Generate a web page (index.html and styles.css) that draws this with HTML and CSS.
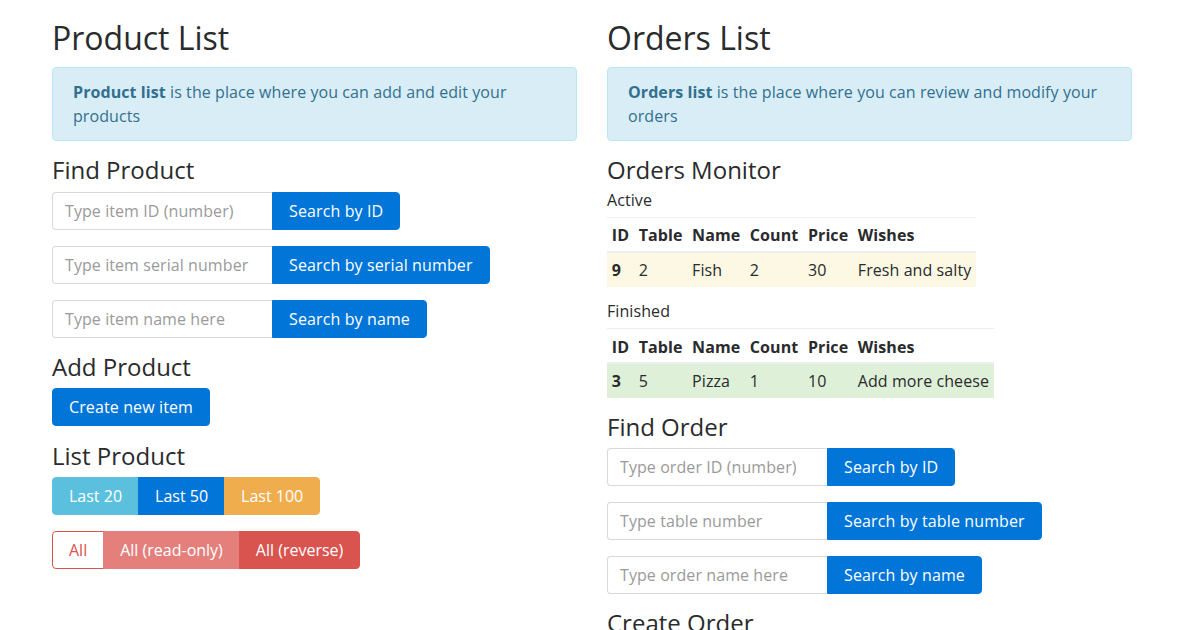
FILE: index.html
```html
<!DOCTYPE html>
<html lang="en">
<head>
<meta charset="utf-8">
<title>Products and Orders</title>
<link rel="stylesheet" href="styles.css">
</head>
<body>
<div class="page">
  <section class="col">
    <h2 class="title">Product List</h2>
    <div class="alert"><strong>Product list</strong> is the place where you can add and edit your products</div>

    <h4 class="sub">Find Product</h4>
    <div class="input-group"><input class="field" type="text" placeholder="Type item ID (number)"><button class="btn btn-primary btn-end">Search by ID</button></div>
    <div class="input-group"><input class="field" type="text" placeholder="Type item serial number"><button class="btn btn-primary btn-end">Search by serial number</button></div>
    <div class="input-group"><input class="field" type="text" placeholder="Type item name here"><button class="btn btn-primary btn-end">Search by name</button></div>

    <h4 class="sub">Add Product</h4>
    <div class="block"><button class="btn btn-primary btn-solo">Create new item</button></div>

    <h4 class="sub">List Product</h4>
    <div class="btn-group">
      <button class="btn btn-info">Last 20</button><button class="btn btn-primary">Last 50</button><button class="btn btn-warning">Last 100</button>
    </div>
    <div class="btn-group">
      <button class="btn btn-outline-danger">All</button><button class="btn btn-danger-light">All (read-only)</button><button class="btn btn-danger">All (reverse)</button>
    </div>
  </section>

  <section class="col">
    <h2 class="title">Orders List</h2>
    <div class="alert"><strong>Orders list</strong> is the place where you can review and modify your orders</div>

    <h4 class="sub">Orders Monitor</h4>
    <div class="label label-first">Active</div>
    <table class="table">
      <thead><tr><th>ID</th><th>Table</th><th>Name</th><th>Count</th><th>Price</th><th>Wishes</th></tr></thead>
      <tbody><tr class="row-warning"><th>9</th><td>2</td><td>Fish</td><td>2</td><td>30</td><td>Fresh and salty</td></tr></tbody>
    </table>
    <div class="label">Finished</div>
    <table class="table table-last">
      <thead><tr><th>ID</th><th>Table</th><th>Name</th><th>Count</th><th>Price</th><th>Wishes</th></tr></thead>
      <tbody><tr class="row-success"><th>3</th><td>5</td><td>Pizza</td><td>1</td><td>10</td><td>Add more cheese</td></tr></tbody>
    </table>

    <h4 class="sub">Find Order</h4>
    <div class="input-group"><input class="field" type="text" placeholder="Type order ID (number)"><button class="btn btn-primary btn-end">Search by ID</button></div>
    <div class="input-group"><input class="field" type="text" placeholder="Type table number"><button class="btn btn-primary btn-end">Search by table number</button></div>
    <div class="input-group"><input class="field" type="text" placeholder="Type order name here"><button class="btn btn-primary btn-end">Search by name</button></div>

    <h4 class="sub">Create Order</h4>
  </section>
</div>
</body>
</html>
```

FILE: styles.css
```css
* { box-sizing: border-box; }
html, body { margin: 0; padding: 0; }
body {
  font-family: "Open Sans", "Liberation Sans", sans-serif;
  font-size: 16px;
  line-height: 1.5;
  letter-spacing: 0.08px;
  color: #292b2c;
  background: #fff;
  overflow: hidden;
}
.page {
  display: grid;
  grid-template-columns: 525px 525px;
  column-gap: 30px;
  padding: 20px 0 0 52px;
}
.title {
  font-size: 32px;
  font-weight: 400;
  line-height: 1.1;
  letter-spacing: 0;
  margin: 0 0 12px;
}
.sub {
  font-size: 24px;
  font-weight: 400;
  line-height: 1.1;
  letter-spacing: 0;
  margin: 0 0 8px;
}
.alert {
  background: #d9edf7;
  border: 1px solid #bce8f1;
  color: #31708f;
  border-radius: 4px;
  padding: 12px 20px;
  margin-bottom: 16px;
}
.alert strong { font-weight: 700; }
.input-group {
  display: flex;
  margin-bottom: 16px;
}
.field {
  width: 220px;
  height: 38px;
  padding: 8px 12px;
  font-family: inherit;
  font-size: 16px;
  line-height: 1.25;
  letter-spacing: 0.08px;
  color: #464a4c;
  border: 1px solid rgba(0,0,0,.15);
  border-right: 0;
  border-radius: 4px 0 0 4px;
  outline: none;
}
.field::placeholder { color: #9a9a9a; opacity: 1; }
.btn {
  font-family: inherit;
  font-size: 16px;
  line-height: 1.25;
  letter-spacing: 0.12px;
  font-weight: 400;
  padding: 8px 16px;
  height: 38px;
  border: 1px solid transparent;
  border-radius: 0;
  color: #fff;
  cursor: pointer;
  white-space: nowrap;
}
.btn-end { border-radius: 0 4px 4px 0; }
.btn-solo { border-radius: 4px; }
.block { margin-bottom: 17px; }
.btn-primary { background: #0275d8; border-color: #0275d8; }
.btn-info { background: #5bc0de; border-color: #5bc0de; }
.btn-warning { background: #f0ad4e; border-color: #f0ad4e; }
.btn-danger { background: #d9534f; border-color: #d9534f; }
.btn-danger-light { background: #e47f7c; border-color: #e47f7c; }
.btn-outline-danger { background: #fff; border-color: #d9534f; color: #d9534f; }
.btn-group {
  display: flex;
  margin-bottom: 16px;
}
.btn-group .btn { letter-spacing: 0; }
.btn-group .btn + .btn { margin-left: -1px; }
.btn-group .btn:first-child { border-radius: 4px 0 0 4px; }
.btn-group .btn:last-child { border-radius: 0 4px 4px 0; }
.label { margin: 0 0 5px; }
.label-first { margin-top: -4px; }
.table {
  border-collapse: collapse;
  margin-bottom: 12px;
}
.table-last { margin-bottom: 16px; }
.table th, .table td {
  padding: 4.8px;
  text-align: left;
  vertical-align: top;
  border-top: 1px solid #eceeef;
}
.table thead th { padding-top: 5.8px; padding-bottom: 3.8px; }
.table th { font-weight: 700; }
.table thead th { border-bottom: 2px solid #eceeef; }
.table tbody td, .table tbody th { border-top: 0; }
.row-warning { background: #fcf8e3; }
.row-success { background: #dff0d8; }
```
